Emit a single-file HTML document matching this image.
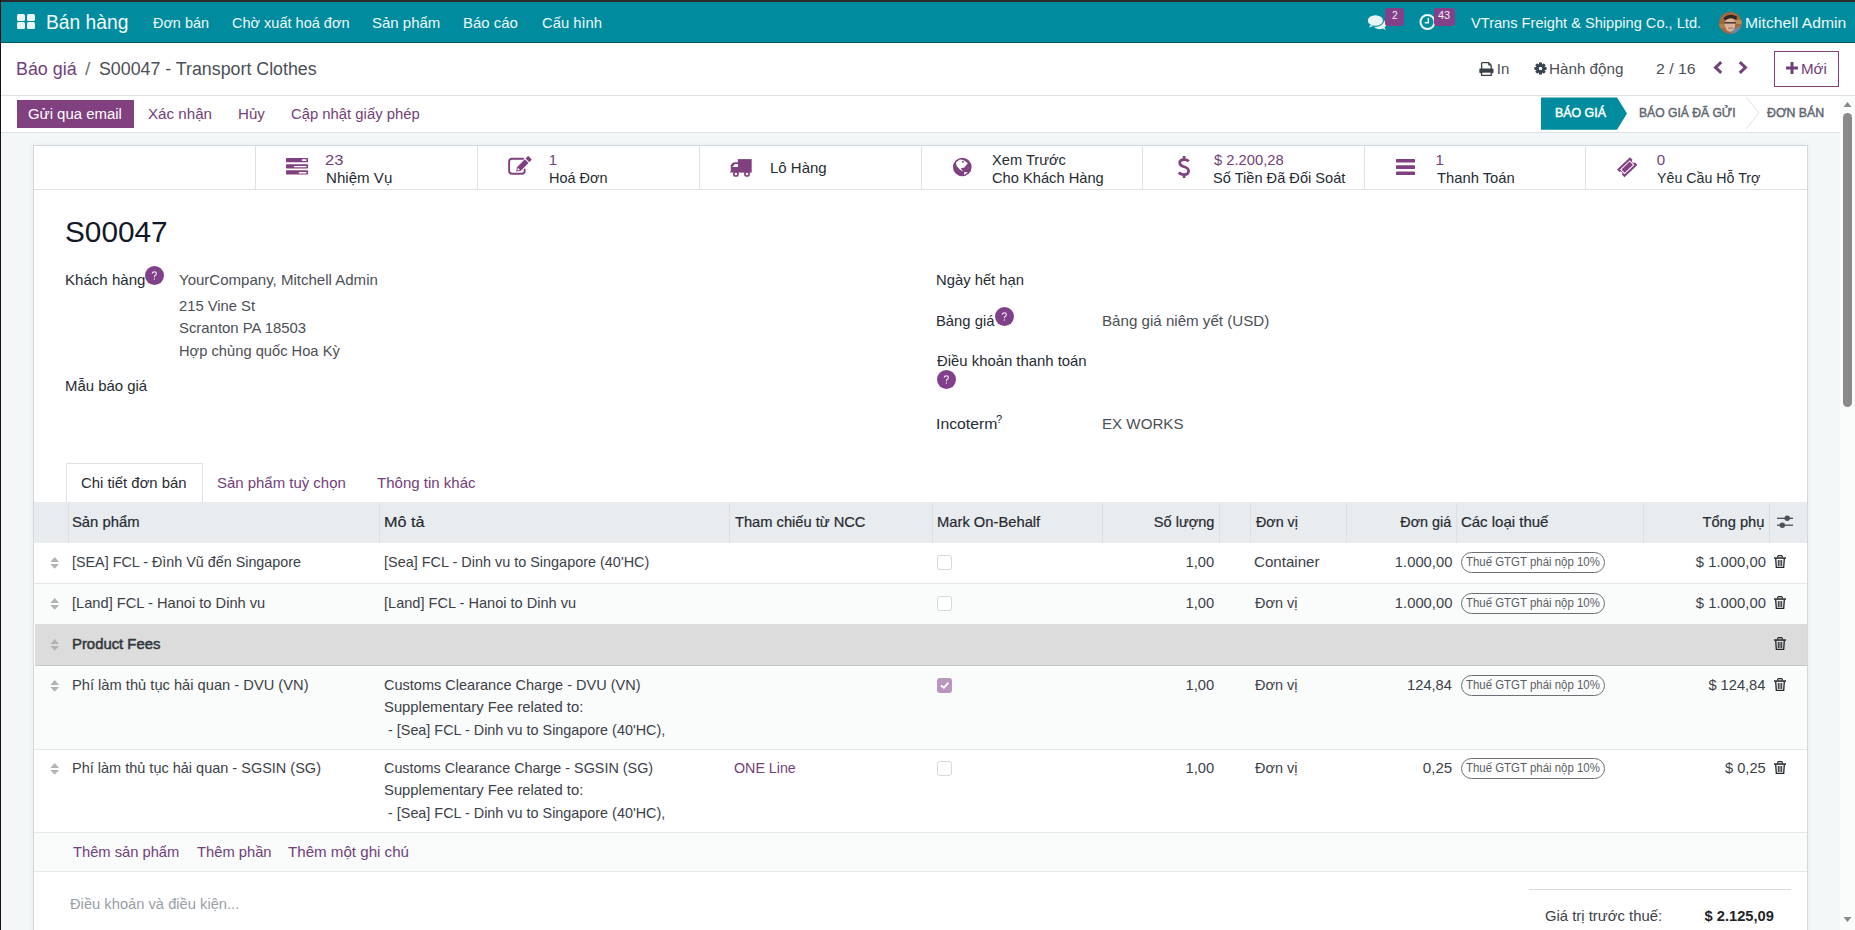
<!DOCTYPE html>
<html><head><meta charset="utf-8"><title>S00047</title>
<style>
html,body{margin:0;padding:0;}
body{width:1855px;height:930px;overflow:hidden;position:relative;background:#fff;font-family:"Liberation Sans",sans-serif;}
.t{position:absolute;white-space:nowrap;line-height:1;}
.r{position:absolute;box-sizing:border-box;}
svg{position:absolute;overflow:visible;}
</style></head><body>
<div class="r" style="left:0px;top:0px;width:1855px;height:2px;background:#2b2b2b;"></div>
<div class="r" style="left:0px;top:0px;width:1px;height:930px;background:#1a0f14;"></div>
<div class="r" style="left:1px;top:2px;width:1854px;height:40px;background:#008c9e;"></div>
<div class="r" style="left:1px;top:42px;width:1854px;height:1px;background:#05535d;"></div>
<div class="r" style="left:17px;top:14px;width:8px;height:7px;background:#e8f4f5;border-radius:1.5px;"></div>
<div class="r" style="left:27px;top:14px;width:8px;height:7px;background:#e8f4f5;border-radius:1.5px;"></div>
<div class="r" style="left:17px;top:22px;width:8px;height:7px;background:#e8f4f5;border-radius:1.5px;"></div>
<div class="r" style="left:27px;top:22px;width:8px;height:7px;background:#e8f4f5;border-radius:1.5px;"></div>
<div class="t" style="top:12px;font-size:20px;color:#f3fbfb;left:46.08px;transform:scale(0.96144578313253,1);transform-origin:0 17px;">Bán hàng</div>
<div class="t" style="top:15px;font-size:15px;color:#eef8f9;left:152.70px;transform:scale(0.9614035087719298,1);transform-origin:0 13px;">Đơn bán</div>
<div class="t" style="top:15px;font-size:15px;color:#eef8f9;left:231.93px;transform:scale(0.9674999999999999,1);transform-origin:0 13px;">Chờ xuất hoá đơn</div>
<div class="t" style="top:15px;font-size:15px;color:#eef8f9;left:372.20px;transform:scale(0.9985074626865672,1);transform-origin:0 13px;">Sản phẩm</div>
<div class="t" style="top:15px;font-size:15px;color:#eef8f9;left:463.30px;transform:scale(0.9981481481481481,1);transform-origin:0 13px;">Báo cáo</div>
<div class="t" style="top:15px;font-size:15px;color:#eef8f9;left:541.71px;transform:scale(0.9864406779661018,1);transform-origin:0 13px;">Cấu hình</div>
<svg style="left:1362px;top:6px" width="30" height="28" viewBox="0 0 30 28">
<ellipse cx="17.6" cy="18.2" rx="6.6" ry="5" fill="#e8f4f5"/>
<path d="M19.5 21.5 L23.9 24.2 L21.8 20.2 Z" fill="#e8f4f5"/>
<ellipse cx="13.4" cy="14.5" rx="8.1" ry="5.9" fill="#e8f4f5" stroke="#008c9e" stroke-width="1.1"/>
<path d="M8.5 19 L6.9 21.6 L11.5 20 Z" fill="#e8f4f5"/>
</svg>
<div class="r" style="left:1385px;top:8px;width:19px;height:18px;background:#84418a;border-radius:3px;"></div>
<div class="t" style="top:10px;font-size:11px;color:#f4eef5;left:1391.80px;transform:scale(0.9333333333333332,1);transform-origin:0 9px;">2</div>
<svg style="left:1419px;top:13px" width="18" height="18" viewBox="0 0 18 18">
<circle cx="8.5" cy="9" r="7" fill="none" stroke="#f0f8f9" stroke-width="2"/>
<path d="M9.3 5 V9.8 H5.8" fill="none" stroke="#f0f8f9" stroke-width="1.5"/>
</svg>
<div class="r" style="left:1434px;top:8px;width:21px;height:18px;background:#84418a;border-radius:3px;"></div>
<div class="t" style="top:10px;font-size:11px;color:#f4eef5;left:1438.40px;transform:scale(0.9916666666666667,1);transform-origin:0 9px;">43</div>
<div class="t" style="top:15px;font-size:15px;color:#eef8f9;left:1470.60px;transform:scale(0.9740425531914894,1);transform-origin:0 13px;">VTrans Freight &amp; Shipping Co., Ltd.</div>
<svg style="left:1719px;top:12px" width="23" height="22" viewBox="0 0 23 22">
<defs><clipPath id="av"><ellipse cx="11.4" cy="10.9" rx="11.3" ry="10.9"/></clipPath></defs>
<g clip-path="url(#av)">
<rect x="0" y="0" width="23" height="22" fill="#a4693d"/>
<rect x="15" y="8" width="8" height="4" fill="#c48b58"/><rect x="0" y="12" width="6" height="4" fill="#b77c4b"/>
<path d="M14 17 L23 14 L23 22 L12 22 Z" fill="#7483a8"/>
<ellipse cx="11" cy="12.5" rx="5.2" ry="7.3" fill="#d9b39b"/>
<path d="M4.5 6 Q10 0.5 18 4.5 L17.5 8 Q12 4.5 6 8.5 Z" fill="#2f2621"/>
<rect x="5.5" y="10" width="11.5" height="1.6" fill="#4d3e39"/>
<rect x="9" y="15.5" width="5" height="1.2" fill="#b07a66"/>
</g></svg>
<div class="t" style="top:15px;font-size:15px;color:#eef8f9;left:1744.75px;transform:scale(1.0463157894736843,1);transform-origin:0 13px;">Mitchell Admin</div>
<div class="t" style="top:60px;font-size:18px;color:#71417a;left:15.81px;transform:scale(0.9933333333333334,1);transform-origin:0 15px;">Báo giá</div>
<div class="t" style="top:60px;font-size:18px;color:#6c757d;left:85.00px;transform:scale(1.08,1);transform-origin:0 15px;">/</div>
<div class="t" style="top:60px;font-size:18px;color:#4b4f56;left:98.91px;transform:scale(0.9885844748858448,1);transform-origin:0 15px;">S00047 - Transport Clothes</div>
<svg style="left:1479px;top:61.5px" width="15" height="14" viewBox="0 0 15 14">
<path d="M2.6 7 V1.3 Q2.6 0.7 3.2 0.7 H9.6 L12.2 3.2 V7" fill="#fff" stroke="#3a4048" stroke-width="1.3"/>
<path d="M9.3 0.7 L12.3 3.6 H9.3 Z" fill="#3a4048"/>
<rect x="0.3" y="6.6" width="14.2" height="4.6" rx="1" fill="#3a4048"/>
<rect x="2.6" y="10" width="9.6" height="3.4" fill="#fff" stroke="#3a4048" stroke-width="1.3"/>
</svg>
<div class="t" style="top:61px;font-size:15px;color:#4b4f56;left:1496.80px;transform:scale(1.0,1);transform-origin:0 13px;">In</div>
<svg style="left:1534px;top:62px" width="13" height="13" viewBox="-7 -7 14 14">
<g fill="#374151">
<circle r="4.8"/>
<rect x="-1.6" y="-6.5" width="3.2" height="13"/>
<rect x="-1.6" y="-6.5" width="3.2" height="13" transform="rotate(45)"/>
<rect x="-1.6" y="-6.5" width="3.2" height="13" transform="rotate(90)"/>
<rect x="-1.6" y="-6.5" width="3.2" height="13" transform="rotate(135)"/>
</g><circle r="1.9" fill="#fff"/>
</svg>
<div class="t" style="top:61px;font-size:15px;color:#4b4f56;left:1548.99px;transform:scale(1.0138888888888888,1);transform-origin:0 13px;">Hành động</div>
<div class="t" style="top:61px;font-size:15px;color:#4b4f56;left:1655.94px;transform:scale(1.0555555555555556,1);transform-origin:0 13px;">2 / 16</div>
<svg style="left:1713px;top:60.8px" width="10" height="13" viewBox="0 0 10 13">
<path d="M8.2 1.2 L2.6 6.5 L8.2 11.8" fill="none" stroke="#71417a" stroke-width="3"/></svg>
<svg style="left:1738px;top:60.8px" width="10" height="13" viewBox="0 0 10 13">
<path d="M1.8 1.2 L7.4 6.5 L1.8 11.8" fill="none" stroke="#71417a" stroke-width="3"/></svg>
<div class="r" style="left:1774px;top:51px;width:65px;height:36px;background:transparent;border:1px solid #81407f;"></div>
<svg style="left:1785.5px;top:61.8px" width="12" height="12"><path d="M6 0 V12 M0 6 H12" stroke="#71417a" stroke-width="3"/></svg>
<div class="t" style="top:61px;font-size:15px;color:#71417a;left:1800.79px;transform:scale(1.0083333333333333,1);transform-origin:0 13px;">Mới</div>
<div class="r" style="left:1px;top:95px;width:1854px;height:1px;background:#dee2e6;"></div>
<div class="r" style="left:17px;top:100px;width:117px;height:28px;background:#81407f;"></div>
<div class="t" style="top:107px;font-size:14px;color:#ffffff;left:28.33px;transform:scale(1.0674418604651164,1);transform-origin:0 12px;">Gửi qua email</div>
<div class="t" style="top:107px;font-size:14px;color:#71417a;left:147.82px;transform:scale(1.0824561403508772,1);transform-origin:0 12px;">Xác nhận</div>
<div class="t" style="top:107px;font-size:14px;color:#71417a;left:237.52px;transform:scale(1.0791666666666666,1);transform-origin:0 12px;">Hủy</div>
<div class="t" style="top:107px;font-size:14px;color:#71417a;left:290.84px;transform:scale(1.06,1);transform-origin:0 12px;">Cập nhật giấy phép</div>
<svg style="left:1541px;top:97px" width="300" height="32">
<path d="M0 0.4 H76 L86 16.6 L76 32.8 H0 Z" fill="#008c9e"/>
<path d="M205 0 L218 16 L205 32" fill="none" stroke="#dee2e6" stroke-width="1"/>
</svg>
<div class="t" style="top:107px;font-size:12.5px;color:#ffffff;left:1555.01px;transform:scale(0.99,1);transform-origin:0 10px;-webkit-text-stroke:0.45px #fff;">BÁO GIÁ</div>
<div class="t" style="top:107px;font-size:12.5px;color:#5f6670;left:1638.53px;transform:scale(0.9693877551020408,1);transform-origin:0 10px;-webkit-text-stroke:0.45px #5f6670;">BÁO GIÁ ĐÃ GỬI</div>
<div class="t" style="top:107px;font-size:12.5px;color:#5f6670;left:1767.40px;transform:scale(0.9859649122807018,1);transform-origin:0 10px;-webkit-text-stroke:0.45px #5f6670;">ĐƠN BÁN</div>
<div class="r" style="left:1px;top:132px;width:1839px;height:1px;background:#dee2e6;"></div>
<div class="r" style="left:1px;top:133px;width:1839px;height:797px;background:#f4f7f8;"></div>
<div class="r" style="left:1840px;top:96px;width:15px;height:834px;background:#fafbfb;"></div>
<svg style="left:1840px;top:96px" width="15" height="834">
<path d="M3.5 11 L7.5 6 L11.5 11 Z" fill="#8a8a8a"/>
<path d="M3.5 821 L7.5 826 L11.5 821 Z" fill="#8a8a8a"/>
</svg>
<div class="r" style="left:1843px;top:113px;width:9px;height:294px;background:#8a8a8a;border-radius:4.5px;"></div>
<div class="r" style="left:33px;top:145px;width:1775px;height:800px;background:#ffffff;border:1px solid #d3d8de;box-shadow:0 0 4px rgba(0,0,0,0.05);"></div>
<div class="r" style="left:34px;top:189px;width:1773px;height:1px;background:#dee2e6;"></div>
<div class="r" style="left:255px;top:146px;width:1px;height:43px;background:#dee2e6;"></div>
<div class="r" style="left:477px;top:146px;width:1px;height:43px;background:#dee2e6;"></div>
<div class="r" style="left:699px;top:146px;width:1px;height:43px;background:#dee2e6;"></div>
<div class="r" style="left:921px;top:146px;width:1px;height:43px;background:#dee2e6;"></div>
<div class="r" style="left:1142px;top:146px;width:1px;height:43px;background:#dee2e6;"></div>
<div class="r" style="left:1364px;top:146px;width:1px;height:43px;background:#dee2e6;"></div>
<div class="r" style="left:1585px;top:146px;width:1px;height:43px;background:#dee2e6;"></div>
<svg style="left:285.6px;top:158px" width="22.1" height="16.7" viewBox="0 0 22.1 16.7">
<g fill="#81407f"><rect x="0" y="0" width="22.1" height="4.3" rx="0.9"/><rect x="0" y="6.2" width="22.1" height="4.3" rx="0.9"/><rect x="0" y="12.3" width="22.1" height="4.3" rx="0.9"/></g>
<g fill="#fff"><rect x="15.9" y="1.3" width="4.6" height="1.7" rx="0.5"/><rect x="7.9" y="8" width="12.6" height="1.3" rx="0.5"/><rect x="12.8" y="14" width="7.7" height="1.5" rx="0.5"/></g>
</svg>
<div class="t" style="top:152px;font-size:15px;color:#71417a;left:325.39px;transform:scale(1.1066666666666667,1);transform-origin:0 13px;">23</div>
<div class="t" style="top:170px;font-size:15px;color:#262b33;left:325.79px;transform:scale(1.00625,1);transform-origin:0 13px;">Nhiệm Vụ</div>
<svg style="left:508px;top:157px" width="23" height="19" viewBox="0 0 23 19">
<path d="M15.8 1.7 H4.1 Q1.1 1.7 1.1 4.7 V13.8 Q1.1 16.8 4.1 16.8 H13.7 Q16.7 16.8 16.7 13.8 V11.8" fill="none" stroke="#81407f" stroke-width="1.9"/>
<g transform="translate(8.2 14.6) rotate(-45)"><path d="M0 0 L3.6 -2.6 H19 Q19.6 -2.6 19.6 -2 V2 Q19.6 2.6 19 2.6 H3.6 Z" fill="#81407f"/>
<rect x="14.8" y="-3" width="1.1" height="6" fill="#fff"/><path d="M1.6 0 L3.8 -1.5 V1.5 Z" fill="#fff"/></g>
</svg>
<div class="t" style="top:152px;font-size:15px;color:#71417a;left:548.70px;">1</div>
<div class="t" style="top:170px;font-size:15px;color:#262b33;left:548.74px;transform:scale(0.964406779661017,1);transform-origin:0 13px;">Hoá Đơn</div>
<svg style="left:728px;top:156px" width="26" height="22" viewBox="0 0 26 22">
<g fill="#81407f"><path d="M9.8 3.1 H23.7 V16.6 H9.8 Z"/>
<path d="M2.8 16.6 V9.3 Q2.8 8.8 3.2 8.4 L5.2 6.6 Q5.6 6.3 6.2 6.3 H10 V16.6 Z"/>
<rect x="2.2" y="15.5" width="1" height="1.1"/></g>
<path d="M4.4 10.9 L6.9 7.9 H9.9 V10.9 Z" fill="#fff"/>
<circle cx="7.9" cy="17.9" r="2.1" fill="#fff" stroke="#81407f" stroke-width="1.7"/>
<circle cx="19" cy="17.9" r="2.1" fill="#fff" stroke="#81407f" stroke-width="1.7"/>
</svg>
<div class="t" style="top:160px;font-size:15px;color:#262b33;left:770.00px;transform:scale(1.0,1);transform-origin:0 13px;">Lô Hàng</div>
<svg style="left:946px;top:152px" width="30" height="30" viewBox="0 0 30 30">
<circle cx="16.3" cy="15" r="9.3" fill="#81407f"/>
<path d="M10 10.3 L13.9 7.4 L17.4 8.1 L21.9 11.3 L18.1 15.8 L15.2 16.1 L15.5 17.4 L17.4 19.4 L14.2 18.1 L10.6 13.9 Z" fill="#fff"/>
<circle cx="16.9" cy="9.7" r="1" fill="#81407f"/>
<path d="M18.1 20 L21.9 20.3 L18.4 22.9 Z" fill="#fff"/>
</svg>
<div class="t" style="top:152px;font-size:15px;color:#262b33;left:991.52px;transform:scale(0.9756756756756757,1);transform-origin:0 13px;">Xem Trước</div>
<div class="t" style="top:170px;font-size:15px;color:#262b33;left:991.52px;transform:scale(0.9778761061946902,1);transform-origin:0 13px;">Cho Khách Hàng</div>
<svg style="left:1178px;top:156px" width="13" height="22" viewBox="0 0 13 22">
<g stroke="#81407f" fill="none" stroke-width="2.7"><path d="M6.1 0 V3.6 M6.1 18.4 V22"/>
<path d="M10.7 5.4 Q9.3 3.7 6 3.7 Q1.7 3.7 1.7 7.1 Q1.7 9.6 6.1 10.8 Q10.6 12.1 10.6 14.9 Q10.6 18.5 6 18.5 Q2.4 18.5 0.9 16.4"/></g>
</svg>
<div class="t" style="top:152px;font-size:15px;color:#71417a;left:1214.00px;transform:scale(0.9828571428571428,1);transform-origin:0 13px;">$ 2.200,28</div>
<div class="t" style="top:170px;font-size:15px;color:#262b33;left:1213.03px;transform:scale(0.9740740740740741,1);transform-origin:0 13px;">Số Tiền Đã Đối Soát</div>
<svg style="left:1396px;top:158.9px" width="19" height="16" viewBox="0 0 19 16">
<g fill="#81407f"><rect x="0" y="0" width="19" height="3.6" rx="0.7"/><rect x="0" y="6.3" width="19" height="3.6" rx="0.7"/><rect x="0" y="12.5" width="19" height="3.5" rx="0.7"/></g>
</svg>
<div class="t" style="top:152px;font-size:15px;color:#71417a;left:1435.60px;">1</div>
<div class="t" style="top:170px;font-size:15px;color:#262b33;left:1436.60px;transform:scale(0.9846153846153846,1);transform-origin:0 13px;">Thanh Toán</div>
<svg style="left:1610px;top:152px" width="35" height="30" viewBox="0 0 35 30">
<g transform="translate(17.2 15.2) rotate(-43.5)">
<path d="M-8.9 -5.35 H8.9 V-1.7 A1.7 1.7 0 0 0 8.9 1.7 V5.35 H-8.9 V1.7 A1.7 1.7 0 0 0 -8.9 -1.7 Z" fill="#81407f"/>
<rect x="-6.8" y="-3.3" width="13.6" height="6.6" fill="#fff"/>
<rect x="-5.7" y="-2.3" width="11.4" height="4.6" fill="#81407f"/>
</g></svg>
<div class="t" style="top:152px;font-size:15px;color:#71417a;left:1656.70px;">0</div>
<div class="t" style="top:170px;font-size:15px;color:#262b33;left:1656.75px;transform:scale(0.9481481481481482,1);transform-origin:0 13px;">Yêu Cầu Hỗ Trợ</div>
<div class="t" style="top:218px;font-size:29px;color:#111827;left:65.17px;transform:scale(1.0265306122448978,1);transform-origin:0 24px;">S00047</div>
<div class="t" style="top:272px;font-size:15px;color:#262b33;left:65.20px;transform:scale(1.0038461538461538,1);transform-origin:0 13px;">Khách hàng</div>
<div class="r" style="left:145px;top:266px;width:19px;height:19px;background:#81418a;border-radius:50%;"></div>
<svg style="left:145px;top:266px" width="19" height="19" viewBox="0 0 19 19">
<path d="M7.2 7.6 Q7.4 5.8 9.4 5.8 Q11.4 5.8 11.4 7.5 Q11.4 8.6 10.4 9.2 Q9.4 9.8 9.4 11.2" fill="none" stroke="#efe6f0" stroke-width="1.15"/>
<rect x="8.8" y="12.4" width="1.2" height="1.2" fill="#efe6f0"/></svg>
<div class="t" style="top:272px;font-size:15px;color:#4b4f56;left:179.20px;transform:scale(1.002030456852792,1);transform-origin:0 13px;">YourCompany, Mitchell Admin</div>
<div class="t" style="top:298px;font-size:15px;color:#4b4f56;left:179.22px;transform:scale(0.9842105263157894,1);transform-origin:0 13px;">215 Vine St</div>
<div class="t" style="top:320px;font-size:15px;color:#4b4f56;left:179.21px;transform:scale(0.9921259842519685,1);transform-origin:0 13px;">Scranton PA 18503</div>
<div class="t" style="top:343px;font-size:15px;color:#4b4f56;left:179.22px;transform:scale(0.9797546012269938,1);transform-origin:0 13px;">Hợp chủng quốc Hoa Kỳ</div>
<div class="t" style="top:378px;font-size:15px;color:#262b33;left:65.20px;transform:scale(0.9951219512195121,1);transform-origin:0 13px;">Mẫu báo giá</div>
<div class="t" style="top:272px;font-size:15px;color:#262b33;left:935.91px;transform:scale(0.9863636363636363,1);transform-origin:0 13px;">Ngày hết hạn</div>
<div class="t" style="top:313px;font-size:15px;color:#262b33;left:935.91px;transform:scale(0.9862068965517242,1);transform-origin:0 13px;">Bảng giá</div>
<div class="r" style="left:995px;top:307px;width:19px;height:19px;background:#81418a;border-radius:50%;"></div>
<svg style="left:995px;top:307px" width="19" height="19" viewBox="0 0 19 19">
<path d="M7.2 7.6 Q7.4 5.8 9.4 5.8 Q11.4 5.8 11.4 7.5 Q11.4 8.6 10.4 9.2 Q9.4 9.8 9.4 11.2" fill="none" stroke="#efe6f0" stroke-width="1.15"/>
<rect x="8.8" y="12.4" width="1.2" height="1.2" fill="#efe6f0"/></svg>
<div class="t" style="top:313px;font-size:15px;color:#4b4f56;left:1101.99px;transform:scale(1.0079268292682928,1);transform-origin:0 13px;">Bảng giá niêm yết (USD)</div>
<div class="t" style="top:353px;font-size:15px;color:#262b33;left:936.90px;transform:scale(0.9913333333333333,1);transform-origin:0 13px;">Điều khoản thanh toán</div>
<div class="r" style="left:937px;top:370px;width:19px;height:19px;background:#81418a;border-radius:50%;"></div>
<svg style="left:937px;top:370px" width="19" height="19" viewBox="0 0 19 19">
<path d="M7.2 7.6 Q7.4 5.8 9.4 5.8 Q11.4 5.8 11.4 7.5 Q11.4 8.6 10.4 9.2 Q9.4 9.8 9.4 11.2" fill="none" stroke="#efe6f0" stroke-width="1.15"/>
<rect x="8.8" y="12.4" width="1.2" height="1.2" fill="#efe6f0"/></svg>
<div class="t" style="top:416px;font-size:15px;color:#262b33;left:935.85px;transform:scale(1.0517857142857143,1);transform-origin:0 13px;">Incoterm</div>
<div class="t" style="top:414px;font-size:11px;color:#262b33;left:995.78px;transform:scale(1.02,1);transform-origin:0 9px;">?</div>
<div class="t" style="top:416px;font-size:15px;color:#4b4f56;left:1101.99px;transform:scale(1.0075949367088606,1);transform-origin:0 13px;">EX WORKS</div>
<div class="r" style="left:66px;top:463px;width:137px;height:40px;background:#fff;border:1px solid #dee2e6;border-bottom:none;"></div>
<div class="t" style="top:475px;font-size:15px;color:#262b33;left:81.41px;transform:scale(0.9904761904761905,1);transform-origin:0 13px;">Chi tiết đơn bán</div>
<div class="t" style="top:475px;font-size:15px;color:#71417a;left:216.80px;transform:scale(0.99609375,1);transform-origin:0 13px;">Sản phẩm tuỳ chọn</div>
<div class="t" style="top:475px;font-size:15px;color:#71417a;left:376.70px;transform:scale(1.0020408163265306,1);transform-origin:0 13px;">Thông tin khác</div>
<div class="r" style="left:34px;top:502px;width:1773px;height:41px;background:#e9ecef;"></div>
<div class="r" style="left:68px;top:503px;width:1px;height:40px;background:#dcdfe3;"></div>
<div class="r" style="left:379px;top:503px;width:1px;height:40px;background:#dcdfe3;"></div>
<div class="r" style="left:729px;top:503px;width:1px;height:40px;background:#dcdfe3;"></div>
<div class="r" style="left:932px;top:503px;width:1px;height:40px;background:#dcdfe3;"></div>
<div class="r" style="left:1102px;top:503px;width:1px;height:40px;background:#dcdfe3;"></div>
<div class="r" style="left:1219px;top:503px;width:1px;height:40px;background:#dcdfe3;"></div>
<div class="r" style="left:1250px;top:503px;width:1px;height:40px;background:#dcdfe3;"></div>
<div class="r" style="left:1346px;top:503px;width:1px;height:40px;background:#dcdfe3;"></div>
<div class="r" style="left:1456px;top:503px;width:1px;height:40px;background:#dcdfe3;"></div>
<div class="r" style="left:1643px;top:503px;width:1px;height:40px;background:#dcdfe3;"></div>
<div class="r" style="left:1769px;top:503px;width:1px;height:40px;background:#dcdfe3;"></div>
<div class="t" style="top:514px;font-size:15px;color:#262b33;left:72.31px;transform:scale(0.9865671641791044,1);transform-origin:0 13px;-webkit-text-stroke:0.2px #212529;">Sản phẩm</div>
<div class="t" style="top:514px;font-size:15px;color:#262b33;left:383.92px;transform:scale(1.0783783783783782,1);transform-origin:0 13px;-webkit-text-stroke:0.2px #212529;">Mô tả</div>
<div class="t" style="top:514px;font-size:15px;color:#262b33;left:734.90px;transform:scale(0.9774436090225563,1);transform-origin:0 13px;-webkit-text-stroke:0.2px #212529;">Tham chiếu từ NCC</div>
<div class="t" style="top:514px;font-size:15px;color:#262b33;left:937.42px;transform:scale(0.9826923076923078,1);transform-origin:0 13px;-webkit-text-stroke:0.2px #212529;">Mark On-Behalf</div>
<div class="t" style="top:514px;font-size:15px;color:#262b33;right:640.99px;transform:scale(0.9704918032786886,1);transform-origin:100% 13px;-webkit-text-stroke:0.2px #212529;">Số lượng</div>
<div class="t" style="top:514px;font-size:15px;color:#262b33;left:1256.00px;transform:scale(0.9511627906976744,1);transform-origin:0 13px;-webkit-text-stroke:0.2px #212529;">Đơn vị</div>
<div class="t" style="top:514px;font-size:15px;color:#262b33;right:403.41px;transform:scale(0.9566037735849057,1);transform-origin:100% 13px;-webkit-text-stroke:0.2px #212529;">Đơn giá</div>
<div class="t" style="top:514px;font-size:15px;color:#262b33;left:1460.90px;transform:scale(1.0,1);transform-origin:0 13px;-webkit-text-stroke:0.2px #212529;">Các loại thuế</div>
<div class="t" style="top:514px;font-size:15px;color:#262b33;right:90.62px;transform:scale(0.9761904761904762,1);transform-origin:100% 13px;-webkit-text-stroke:0.2px #212529;">Tổng phụ</div>
<svg style="left:1777px;top:514px" width="16" height="14" viewBox="0 0 16 14">
<g stroke="#495057" stroke-width="1.3"><line x1="0" y1="4.3" x2="16" y2="4.3"/><line x1="0" y1="11.2" x2="16" y2="11.2"/></g>
<circle cx="10.2" cy="4.3" r="2.7" fill="#495057"/><circle cx="5.3" cy="11.2" r="2.7" fill="#495057"/>
</svg>
<div class="r" style="left:34px;top:583px;width:1773px;height:1px;background:#e5e7eb;"></div>
<svg style="left:50px;top:556.5px" width="10" height="13" viewBox="0 0 10 13">
<path d="M0.3 5 L4.7 0 L9 5 Z M0.3 6.9 L4.7 11.7 L9 6.9 Z" fill="#b1b3b5"/></svg>
<div class="t" style="top:554px;font-size:15px;color:#3c4148;left:71.64px;transform:scale(0.9558823529411765,1);transform-origin:0 13px;">[SEA] FCL - Đình Vũ đến Singapore</div>
<div class="t" style="top:554px;font-size:15px;color:#3c4148;left:384.04px;transform:scale(0.9620437956204381,1);transform-origin:0 13px;">[Sea] FCL - Dinh vu to Singapore (40'HC)</div>
<div class="r" style="left:937px;top:554.5px;width:15px;height:15px;background:#fff;border:1px solid #d5d8dc;border-radius:3px;"></div>
<div class="t" style="top:554px;font-size:15px;color:#3c4148;right:640.60px;transform:scale(0.9821428571428571,1);transform-origin:100% 13px;">1,00</div>
<div class="t" style="top:554px;font-size:15px;color:#3c4148;left:1254.39px;transform:scale(1.0078125,1);transform-origin:0 13px;">Container</div>
<div class="t" style="top:554px;font-size:15px;color:#3c4148;right:402.61px;transform:scale(0.9859649122807018,1);transform-origin:100% 13px;">1.000,00</div>
<div class="r" style="left:1461px;top:552.3px;width:144px;height:21px;background:transparent;border:1px solid #6c7075;border-radius:10.5px;"></div>
<div class="t" style="top:556px;font-size:12px;color:#5a5e64;left:1466.20px;transform:scale(0.9521428571428572,1);transform-origin:0 10px;">Thuế GTGT phái nộp 10%</div>
<div class="t" style="top:554px;font-size:15px;color:#3c4148;right:89.50px;transform:scale(0.9885714285714287,1);transform-origin:100% 13px;">$ 1.000,00</div>
<svg style="left:1774px;top:554.6px" width="12" height="13" viewBox="0 0 12 13">
<path d="M3.7 2.6 V1.6 Q3.7 0.6 4.7 0.6 H7.3 Q8.3 0.6 8.3 1.6 V2.6" fill="none" stroke="#212529" stroke-width="1.2"/>
<rect x="0" y="2.3" width="12" height="1.5" fill="#212529"/>
<path d="M1.7 3.6 L2.3 12.3 H9.7 L10.3 3.6" fill="none" stroke="#212529" stroke-width="1.3"/>
<g fill="#212529"><rect x="3.8" y="5" width="1" height="6"/><rect x="5.5" y="5" width="1" height="6"/><rect x="7.2" y="5" width="1" height="6"/></g>
</svg>
<div class="r" style="left:34px;top:584px;width:1773px;height:40px;background:#fafbfb;"></div>
<svg style="left:50px;top:597.5px" width="10" height="13" viewBox="0 0 10 13">
<path d="M0.3 5 L4.7 0 L9 5 Z M0.3 6.9 L4.7 11.7 L9 6.9 Z" fill="#b1b3b5"/></svg>
<div class="t" style="top:595px;font-size:15px;color:#3c4148;left:71.62px;transform:scale(0.976530612244898,1);transform-origin:0 13px;">[Land] FCL - Hanoi to Dinh vu</div>
<div class="t" style="top:595px;font-size:15px;color:#3c4148;left:384.03px;transform:scale(0.9709183673469388,1);transform-origin:0 13px;">[Land] FCL - Hanoi to Dinh vu</div>
<div class="r" style="left:937px;top:595.5px;width:15px;height:15px;background:#fff;border:1px solid #d5d8dc;border-radius:3px;"></div>
<div class="t" style="top:595px;font-size:15px;color:#3c4148;right:640.60px;transform:scale(0.9821428571428571,1);transform-origin:100% 13px;">1,00</div>
<div class="t" style="top:595px;font-size:15px;color:#3c4148;left:1255.40px;transform:scale(0.9651162790697675,1);transform-origin:0 13px;">Đơn vị</div>
<div class="t" style="top:595px;font-size:15px;color:#3c4148;right:402.61px;transform:scale(0.9859649122807018,1);transform-origin:100% 13px;">1.000,00</div>
<div class="r" style="left:1461px;top:593.3px;width:144px;height:21px;background:transparent;border:1px solid #6c7075;border-radius:10.5px;"></div>
<div class="t" style="top:597px;font-size:12px;color:#5a5e64;left:1466.20px;transform:scale(0.9521428571428572,1);transform-origin:0 10px;">Thuế GTGT phái nộp 10%</div>
<div class="t" style="top:595px;font-size:15px;color:#3c4148;right:89.50px;transform:scale(0.9885714285714287,1);transform-origin:100% 13px;">$ 1.000,00</div>
<svg style="left:1774px;top:595.6px" width="12" height="13" viewBox="0 0 12 13">
<path d="M3.7 2.6 V1.6 Q3.7 0.6 4.7 0.6 H7.3 Q8.3 0.6 8.3 1.6 V2.6" fill="none" stroke="#212529" stroke-width="1.2"/>
<rect x="0" y="2.3" width="12" height="1.5" fill="#212529"/>
<path d="M1.7 3.6 L2.3 12.3 H9.7 L10.3 3.6" fill="none" stroke="#212529" stroke-width="1.3"/>
<g fill="#212529"><rect x="3.8" y="5" width="1" height="6"/><rect x="5.5" y="5" width="1" height="6"/><rect x="7.2" y="5" width="1" height="6"/></g>
</svg>
<div class="r" style="left:35px;top:624px;width:1772px;height:41px;background:#dcdcdc;"></div>
<div class="r" style="left:35px;top:665px;width:1772px;height:1px;background:#c6c6c6;"></div>
<svg style="left:50px;top:638.5px" width="10" height="13" viewBox="0 0 10 13">
<path d="M0.3 5 L4.7 0 L9 5 Z M0.3 6.9 L4.7 11.7 L9 6.9 Z" fill="#b1b3b5"/></svg>
<div class="t" style="top:636px;font-size:15px;color:#30363d;left:71.81px;transform:scale(0.990909090909091,1);transform-origin:0 13px;-webkit-text-stroke:0.5px #30363d;">Product Fees</div>
<svg style="left:1774px;top:636.6px" width="12" height="13" viewBox="0 0 12 13">
<path d="M3.7 2.6 V1.6 Q3.7 0.6 4.7 0.6 H7.3 Q8.3 0.6 8.3 1.6 V2.6" fill="none" stroke="#212529" stroke-width="1.2"/>
<rect x="0" y="2.3" width="12" height="1.5" fill="#212529"/>
<path d="M1.7 3.6 L2.3 12.3 H9.7 L10.3 3.6" fill="none" stroke="#212529" stroke-width="1.3"/>
<g fill="#212529"><rect x="3.8" y="5" width="1" height="6"/><rect x="5.5" y="5" width="1" height="6"/><rect x="7.2" y="5" width="1" height="6"/></g>
</svg>
<div class="r" style="left:34px;top:666px;width:1773px;height:83px;background:#fafbfb;"></div>
<div class="r" style="left:34px;top:749px;width:1773px;height:1px;background:#e5e7eb;"></div>
<svg style="left:50px;top:679.5px" width="10" height="13" viewBox="0 0 10 13">
<path d="M0.3 5 L4.7 0 L9 5 Z M0.3 6.9 L4.7 11.7 L9 6.9 Z" fill="#b1b3b5"/></svg>
<div class="t" style="top:677px;font-size:15px;color:#3c4148;left:71.62px;transform:scale(0.9783333333333334,1);transform-origin:0 13px;">Phí làm thủ tục hải quan - DVU (VN)</div>
<div class="t" style="top:677px;font-size:15px;color:#3c4148;left:384.03px;transform:scale(0.9680608365019011,1);transform-origin:0 13px;">Customs Clearance Charge - DVU (VN)</div>
<div class="t" style="top:699px;font-size:15px;color:#3c4148;left:384.01px;transform:scale(0.9875,1);transform-origin:0 13px;">Supplementary Fee related to:</div>
<div class="t" style="top:722px;font-size:15px;color:#3c4148;left:387.64px;transform:scale(0.9588850174216027,1);transform-origin:0 13px;"> - [Sea] FCL - Dinh vu to Singapore (40'HC),</div>
<div class="r" style="left:937px;top:677.5px;width:15px;height:15px;background:#b896be;border-radius:3px;"></div>
<svg style="left:937px;top:677.5px" width="15" height="15"><path d="M4 7.4 L6.9 9.8 L11.4 4.7" fill="none" stroke="#fff" stroke-width="1.9"/></svg>
<div class="t" style="top:677px;font-size:15px;color:#3c4148;right:640.60px;transform:scale(0.9821428571428571,1);transform-origin:100% 13px;">1,00</div>
<div class="t" style="top:677px;font-size:15px;color:#3c4148;left:1255.40px;transform:scale(0.9651162790697675,1);transform-origin:0 13px;">Đơn vị</div>
<div class="t" style="top:677px;font-size:15px;color:#3c4148;right:403.11px;transform:scale(0.9755555555555555,1);transform-origin:100% 13px;">124,84</div>
<div class="r" style="left:1461px;top:675.3px;width:144px;height:21px;background:transparent;border:1px solid #6c7075;border-radius:10.5px;"></div>
<div class="t" style="top:679px;font-size:12px;color:#5a5e64;left:1466.20px;transform:scale(0.9521428571428572,1);transform-origin:0 10px;">Thuế GTGT phái nộp 10%</div>
<div class="t" style="top:677px;font-size:15px;color:#3c4148;right:90.02px;transform:scale(0.9758620689655173,1);transform-origin:100% 13px;">$ 124,84</div>
<svg style="left:1774px;top:677.6px" width="12" height="13" viewBox="0 0 12 13">
<path d="M3.7 2.6 V1.6 Q3.7 0.6 4.7 0.6 H7.3 Q8.3 0.6 8.3 1.6 V2.6" fill="none" stroke="#212529" stroke-width="1.2"/>
<rect x="0" y="2.3" width="12" height="1.5" fill="#212529"/>
<path d="M1.7 3.6 L2.3 12.3 H9.7 L10.3 3.6" fill="none" stroke="#212529" stroke-width="1.3"/>
<g fill="#212529"><rect x="3.8" y="5" width="1" height="6"/><rect x="5.5" y="5" width="1" height="6"/><rect x="7.2" y="5" width="1" height="6"/></g>
</svg>
<div class="r" style="left:34px;top:832px;width:1773px;height:1px;background:#e5e7eb;"></div>
<svg style="left:50px;top:762.5px" width="10" height="13" viewBox="0 0 10 13">
<path d="M0.3 5 L4.7 0 L9 5 Z M0.3 6.9 L4.7 11.7 L9 6.9 Z" fill="#b1b3b5"/></svg>
<div class="t" style="top:760px;font-size:15px;color:#3c4148;left:71.63px;transform:scale(0.96640625,1);transform-origin:0 13px;">Phí làm thủ tục hải quan - SGSIN (SG)</div>
<div class="t" style="top:760px;font-size:15px;color:#3c4148;left:384.04px;transform:scale(0.9580645161290323,1);transform-origin:0 13px;">Customs Clearance Charge - SGSIN (SG)</div>
<div class="t" style="top:782px;font-size:15px;color:#3c4148;left:384.01px;transform:scale(0.9875,1);transform-origin:0 13px;">Supplementary Fee related to:</div>
<div class="t" style="top:805px;font-size:15px;color:#3c4148;left:387.64px;transform:scale(0.9588850174216027,1);transform-origin:0 13px;"> - [Sea] FCL - Dinh vu to Singapore (40'HC),</div>
<div class="t" style="top:760px;font-size:15px;color:#71417a;left:733.65px;transform:scale(0.95,1);transform-origin:0 13px;">ONE Line</div>
<div class="r" style="left:937px;top:760.5px;width:15px;height:15px;background:#fff;border:1px solid #d5d8dc;border-radius:3px;"></div>
<div class="t" style="top:760px;font-size:15px;color:#3c4148;right:640.60px;transform:scale(0.9821428571428571,1);transform-origin:100% 13px;">1,00</div>
<div class="t" style="top:760px;font-size:15px;color:#3c4148;left:1255.40px;transform:scale(0.9651162790697675,1);transform-origin:0 13px;">Đơn vị</div>
<div class="t" style="top:760px;font-size:15px;color:#3c4148;right:402.80px;transform:scale(1.0071428571428571,1);transform-origin:100% 13px;">0,25</div>
<div class="r" style="left:1461px;top:758.3px;width:144px;height:21px;background:transparent;border:1px solid #6c7075;border-radius:10.5px;"></div>
<div class="t" style="top:762px;font-size:12px;color:#5a5e64;left:1466.20px;transform:scale(0.9521428571428572,1);transform-origin:0 10px;">Thuế GTGT phái nộp 10%</div>
<div class="t" style="top:760px;font-size:15px;color:#3c4148;right:89.70px;transform:scale(0.975609756097561,1);transform-origin:100% 13px;">$ 0,25</div>
<svg style="left:1774px;top:760.6px" width="12" height="13" viewBox="0 0 12 13">
<path d="M3.7 2.6 V1.6 Q3.7 0.6 4.7 0.6 H7.3 Q8.3 0.6 8.3 1.6 V2.6" fill="none" stroke="#212529" stroke-width="1.2"/>
<rect x="0" y="2.3" width="12" height="1.5" fill="#212529"/>
<path d="M1.7 3.6 L2.3 12.3 H9.7 L10.3 3.6" fill="none" stroke="#212529" stroke-width="1.3"/>
<g fill="#212529"><rect x="3.8" y="5" width="1" height="6"/><rect x="5.5" y="5" width="1" height="6"/><rect x="7.2" y="5" width="1" height="6"/></g>
</svg>
<div class="r" style="left:34px;top:833px;width:1773px;height:38px;background:#fafbfb;"></div>
<div class="r" style="left:34px;top:871px;width:1773px;height:1px;background:#e5e7eb;"></div>
<div class="t" style="top:844px;font-size:15px;color:#71417a;left:73.30px;transform:scale(0.9805555555555556,1);transform-origin:0 13px;">Thêm sản phẩm</div>
<div class="t" style="top:844px;font-size:15px;color:#71417a;left:197.20px;transform:scale(0.9826666666666667,1);transform-origin:0 13px;">Thêm phần</div>
<div class="t" style="top:844px;font-size:15px;color:#71417a;left:287.50px;transform:scale(1.007563025210084,1);transform-origin:0 13px;">Thêm một ghi chú</div>
<div class="t" style="top:896px;font-size:15px;color:#9aa0a6;left:69.70px;transform:scale(0.9808139534883721,1);transform-origin:0 13px;">Điều khoản và điều kiện...</div>
<div class="r" style="left:1529px;top:889px;width:262px;height:1px;background:#d8dce0;"></div>
<div class="t" style="top:908px;font-size:15px;color:#3c4148;left:1545.41px;transform:scale(0.9896551724137931,1);transform-origin:0 13px;">Giá trị trước thuế:</div>
<div class="t" style="top:908px;font-size:15px;color:#212529;font-weight:700;right:80.81px;transform:scale(0.9771428571428572,1);transform-origin:100% 13px;">$ 2.125,09</div>
</body></html>
